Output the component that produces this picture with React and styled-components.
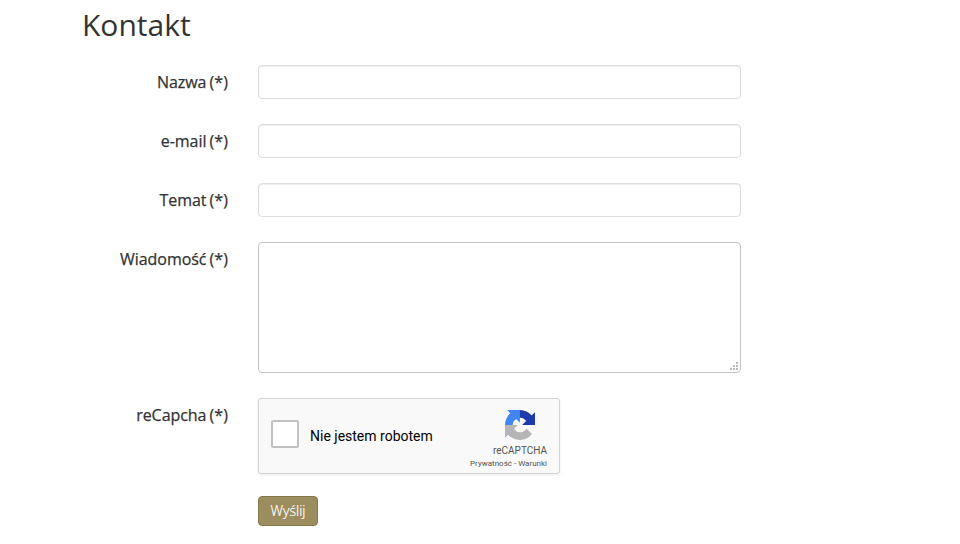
import React from "react";
import styled, { createGlobalStyle } from "styled-components";

const GlobalStyle = createGlobalStyle`
  * {
    box-sizing: border-box;
  }
  body {
    margin: 0;
    background: #ffffff;
    color: #333333;
    font-family: "Open Sans", sans-serif;
    font-size: 16px;
  }
`;

const Page = styled.main`
  width: 741px;
  padding: 5px 0 0 83px;
`;

const Title = styled.h1`
  margin: 0 0 20px -1px;
  font-size: 30px;
  font-weight: 400;
  line-height: 40px;
`;

const Form = styled.form`
  display: flex;
  flex-direction: column;
`;

const Row = styled.div`
  display: grid;
  grid-template-columns: 145px 483px;
  column-gap: 30px;
  align-items: start;
  margin-bottom: ${(props) => props.$gap || 25}px;
`;

const Label = styled.label`
  padding-top: 5px;
  font-size: 16px;
  line-height: 24px;
  text-align: right;
  white-space: nowrap;
  letter-spacing: -0.05px;
  -webkit-text-stroke: 0.25px #333333;
`;

const Required = styled.span`
  margin-left: 3px;
  letter-spacing: 0.1px;
`;

const Input = styled.input`
  display: block;
  width: 100%;
  height: 34px;
  padding: 6px 12px;
  border: 1px solid #dddddd;
  border-radius: 4px;
  box-shadow: inset 0 1px 1px rgba(0, 0, 0, 0.075);
  font: inherit;
`;

const AreaWrapper = styled.div`
  position: relative;
`;

const TextArea = styled.textarea`
  display: block;
  width: 100%;
  height: 131px;
  padding: 6px 12px;
  border: 1px solid #c4c4c4;
  border-radius: 4px;
  resize: none;
  font: inherit;
`;

const Grip = styled.svg`
  position: absolute;
  right: 3px;
  bottom: 3px;
  pointer-events: none;
`;

const Captcha = styled.div`
  display: flex;
  width: 302px;
  height: 76px;
  padding-left: 12px;
  border: 1px solid #d3d3d3;
  border-radius: 3px;
  background: #f9f9f9;
  box-shadow: 0 1px 3px rgba(0, 0, 0, 0.08);
  font-family: Roboto, sans-serif;
`;

const Checkbox = styled.input`
  appearance: none;
  width: 28px;
  height: 28px;
  margin: 21px 11px 0 0;
  border: 2px solid #c1c1c1;
  border-radius: 2px;
  background: #ffffff;
`;

const CaptchaText = styled.span`
  flex: 1;
  padding-top: 29px;
  color: #000000;
  font-size: 14px;
  line-height: 17px;
`;

const Brand = styled.div`
  display: flex;
  flex-direction: column;
  align-items: flex-end;
  padding: 11px 12px 0 0;
  color: #555555;
`;

const Logo = styled.svg`
  margin-right: 12px;
`;

const BrandName = styled.span`
  margin-top: 4px;
  font-size: 10px;
  line-height: 14px;
`;

const Terms = styled.span`
  padding-top: 1px;
  font-size: 8px;
  line-height: 10px;
`;

const Button = styled.button`
  width: 60px;
  height: 30px;
  margin-left: 175px;
  padding: 0 0 1px;
  border: 1px solid #857849;
  border-radius: 4px;
  background: #9c8d5f;
  color: #ffffff;
  font-family: inherit;
  font-size: 14px;
  font-weight: 300;
  line-height: 20px;
  -webkit-text-stroke: 0.2px #ffffff;
`;

const fields = [
  { name: "name", label: "Nazwa" },
  { name: "email", label: "e-mail" },
  { name: "subject", label: "Temat" },
];

const FieldLabel = ({ htmlFor, children }) => (
  <Label htmlFor={htmlFor}>
    {children}
    <Required>(*)</Required>
  </Label>
);

const RecaptchaLogo = () => (
  <Logo width="30" height="30" viewBox="0 0 64 64">
    <path
      fill="#1c3aa9"
      d="M64 31.955l-.033-1.37V4.687l-7.16 7.16C50.948 4.674 42.033.093 32.05.093c-10.4 0-19.622 4.96-25.458 12.64l11.736 11.86a15.55 15.55 0 0 1 4.754-5.334c2.05-1.6 4.952-2.906 8.968-2.906.485 0 .86.057 1.135.163 4.976.393 9.288 3.14 11.828 7.124l-8.307 8.307L64 31.953"
    />
    <path
      fill="#4285f4"
      d="M31.862.094l-1.37.033H4.594l7.16 7.16C4.58 13.147 0 22.06 0 32.046c0 10.4 4.96 19.622 12.64 25.458L24.5 45.768a15.55 15.55 0 0 1-5.334-4.754c-1.6-2.05-2.906-4.952-2.906-8.968 0-.485.057-.86.163-1.135.393-4.976 3.14-9.288 7.124-11.828l8.307 8.307L31.86.095"
    />
    <path
      fill="#b5b5b5"
      d="M.001 32.045l.033 1.37v25.898l7.16-7.16c5.86 7.173 14.774 11.754 24.76 11.754 10.4 0 19.622-4.96 25.458-12.64l-11.736-11.86a15.55 15.55 0 0 1-4.754 5.334c-2.05 1.6-4.952 2.906-8.968 2.906-.485 0-.86-.057-1.135-.163-4.976-.393-9.288-3.14-11.828-7.124l8.307-8.307c-10.522.04-22.4.066-27.295-.005"
    />
  </Logo>
);

const App = () => {
  const onSubmit = (event) => event.preventDefault();

  return (
    <Page>
      <GlobalStyle />
      <Title>Kontakt</Title>
      <Form onSubmit={onSubmit}>
        {fields.map((field) => (
          <Row key={field.name}>
            <FieldLabel htmlFor={field.name}>{field.label}</FieldLabel>
            <Input id={field.name} name={field.name} />
          </Row>
        ))}
        <Row>
          <FieldLabel htmlFor="message">Wiadomość</FieldLabel>
          <AreaWrapper>
            <TextArea id="message" name="message" />
            <Grip width="8" height="8" viewBox="0 0 8 8" fill="#bdbdbd">
              <path d="M6 0h2v2H6zM3 3h2v2H3zM6 3h2v2H6zM0 6h2v2H0zM3 6h2v2H3zM6 6h2v2H6z" />
            </Grip>
          </AreaWrapper>
        </Row>
        <Row $gap={22}>
          <FieldLabel htmlFor="captcha">reCapcha</FieldLabel>
          <Captcha>
            <Checkbox type="checkbox" id="captcha" />
            <CaptchaText>Nie jestem robotem</CaptchaText>
            <Brand>
              <RecaptchaLogo />
              <BrandName>reCAPTCHA</BrandName>
              <Terms>Prywatność - Warunki</Terms>
            </Brand>
          </Captcha>
        </Row>
        <Button type="submit">Wyślij</Button>
      </Form>
    </Page>
  );
};

export default App;
